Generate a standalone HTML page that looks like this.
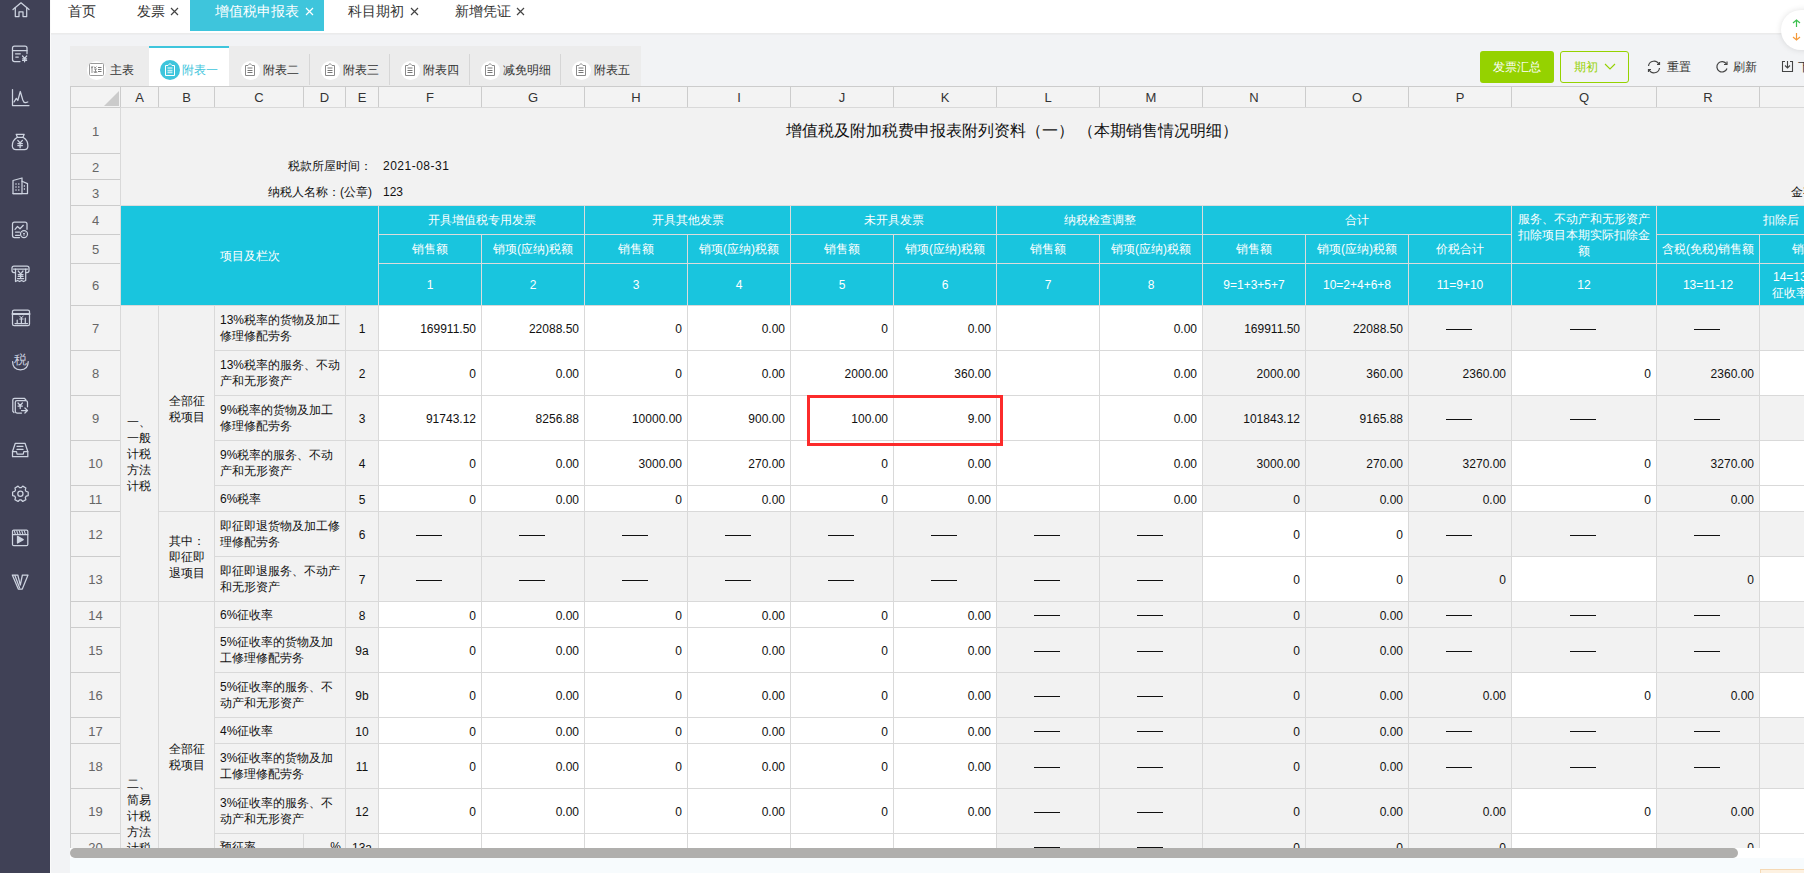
<!DOCTYPE html>
<html><head><meta charset="utf-8"><style>
*{box-sizing:border-box}
html,body{margin:0;padding:0}
body{width:1804px;height:873px;overflow:hidden;position:relative;background:#f2f3f5;font-family:"Liberation Sans",sans-serif;font-size:12px;color:#333}
.abs{position:absolute}
#grid{position:absolute;left:0;top:0;width:1804px;height:848px;overflow:hidden}
.c{position:absolute;border:1px solid;display:flex;align-items:center;white-space:nowrap;overflow:hidden;line-height:14px}
.t{position:absolute;white-space:nowrap;font-size:12px;line-height:14px;color:#111}
.tri{position:absolute;right:1px;bottom:1px;width:0;height:0;border-left:15px solid transparent;border-bottom:15px solid #cbcbcb}
.tb{top:3px;font-size:14px;line-height:16px}
.st{top:63px;font-size:12px;line-height:14px;color:#333}
.dash{display:inline-block;width:26px;height:1px;background:#111;margin-top:2px;margin-right:2px}
</style></head>
<body>
<div class="abs" style="left:0;top:0;width:50px;height:873px;background:#404156"></div><svg class="abs" style="left:8px;top:-4px" width="24" height="24" viewBox="0 0 24 24" fill="none" stroke="#cdd3e0" stroke-width="1.25" stroke-linejoin="round" stroke-linecap="round"><path d="M5 13.5 L13 6.8 L21 13.5"/><path d="M7.3 11.5 V20.5 H11 V15.8 H15 V20.5 H18.7 V11.5"/></svg><svg class="abs" style="left:8px;top:40px" width="24" height="24" viewBox="0 0 24 24" fill="none" stroke="#cdd3e0" stroke-width="1.25" stroke-linejoin="round" stroke-linecap="round"><path d="M12 21.5 H6.5 Q4.5 21.5 4.5 19.5 V8 Q4.5 6 6.5 6 H17 Q19 6 19 8 V13.5"/><path d="M4.5 10.5 H19"/><path d="M7.5 13.8 H12.3 M7.8 17 H10.3"/><path d="M14.5 16 L16.6 18.3 L18.7 16 M16.6 18.3 V21.8 M14.6 18.8 H18.6 M14.6 20.4 H18.6"/></svg><svg class="abs" style="left:8px;top:84px" width="24" height="24" viewBox="0 0 24 24" fill="none" stroke="#cdd3e0" stroke-width="1.25" stroke-linejoin="round" stroke-linecap="round"><path d="M4.5 5.5 V21.5 H21"/><path d="M6 18 L8.3 14.3 L9.8 16.5 L12.3 7.5 L14.8 16 Q15.8 19 17.8 18.6 L19.8 18"/></svg><svg class="abs" style="left:8px;top:128px" width="24" height="24" viewBox="0 0 24 24" fill="none" stroke="#cdd3e0" stroke-width="1.25" stroke-linejoin="round" stroke-linecap="round"><path d="M8.2 6.3 H16.2 L15 9.3 H9.4 Z"/><path d="M9.4 9.3 Q4 12.5 4.3 18 Q4.6 21.6 8 21.6 H16.5 Q19.8 21.6 19.9 18 Q20.2 12.5 15 9.3"/><path d="M9.8 12.3 L12.1 15 L14.4 12.3 M12.1 15 V19.8 M9.8 15.6 H14.4 M9.8 17.6 H14.4"/></svg><svg class="abs" style="left:8px;top:172px" width="24" height="24" viewBox="0 0 24 24" fill="none" stroke="#cdd3e0" stroke-width="1.25" stroke-linejoin="round" stroke-linecap="round"><path d="M5 21.5 V8.5 L14 6 V21.5 Z"/><path d="M14 9.2 L19.5 11.6 V21.5 H5"/><path d="M7.4 12 H8.6 M10.2 12 H11.4 M7.4 15 H8.6 M10.2 15 H11.4 M7.4 18 H8.6 M10.2 18 H11.4 M15.8 14 H17 M15.8 17 H17" stroke-width="1.6" stroke-linecap="butt"/></svg><svg class="abs" style="left:8px;top:216px" width="24" height="24" viewBox="0 0 24 24" fill="none" stroke="#cdd3e0" stroke-width="1.25" stroke-linejoin="round" stroke-linecap="round"><path d="M11.5 21.5 H6.5 Q4.5 21.5 4.5 19.5 V8 Q4.5 6 6.5 6 H17 Q19 6 19 8 V13.3"/><path d="M7 13.3 L9.5 10.5 L12 12.8 L15.3 9.3"/><path d="M7.5 16 H11.5 M7.5 19.3 H11.5"/><circle cx="16" cy="18.1" r="3.5"/><path d="M15 17 L16 18 L17 17 M16 18 V19.5" stroke-width="0.9"/></svg><svg class="abs" style="left:8px;top:260px" width="24" height="24" viewBox="0 0 24 24" fill="none" stroke="#cdd3e0" stroke-width="1.25" stroke-linejoin="round" stroke-linecap="round"><path d="M7.2 12.5 H6 Q4 12.5 4 10.5 V8 Q4 6 6 6 H19 Q21 6 21 8 V10.5 Q21 12.5 19 12.5 H17.8"/><path d="M5.5 9 H19.5"/><path d="M7.5 9 V21.5 L9.6 20.5 L11.6 21.5 L13.6 20.5 L15.6 21.5 L17.7 20.5 V9"/><path d="M10.2 11 L12.6 13.8 L15 11 M12.6 13.8 V18.3 M10.2 14.5 H15 M10.2 16.4 H15 M9.6 18.5 H15.6"/></svg><svg class="abs" style="left:8px;top:304px" width="24" height="24" viewBox="0 0 24 24" fill="none" stroke="#cdd3e0" stroke-width="1.25" stroke-linejoin="round" stroke-linecap="round"><rect x="4.5" y="6" width="17" height="15.6" rx="1.6"/><path d="M4.5 10 H21.5" stroke-width="2"/><path d="M7 19.5 H19.5"/><path d="M9.2 16 V19.5 M13.4 13.5 V19.5 M17.3 14.2 V19.5"/><path d="M11.6 12 L13.4 14 L15.2 12 M11.6 15 H15.2" stroke-width="1"/></svg><svg class="abs" style="left:8px;top:348px" width="24" height="24" viewBox="0 0 24 24" fill="none" stroke="#cdd3e0" stroke-width="1.25" stroke-linejoin="round" stroke-linecap="round"><path d="M4.6 13.5 Q4.6 21.8 12.4 21.8 Q20.2 21.8 20.2 13.5"/><text x="12.4" y="16.3" font-size="12.5" text-anchor="middle" fill="#cdd3e0" stroke="none" font-family="Liberation Sans">税</text></svg><svg class="abs" style="left:8px;top:392px" width="24" height="24" viewBox="0 0 24 24" fill="none" stroke="#cdd3e0" stroke-width="1.25" stroke-linejoin="round" stroke-linecap="round"><path d="M6 20.5 L4.8 19.3 V8 Q4.8 6.3 6.5 6.3 H16.3 L17.8 7.8"/><path d="M13.5 21 H9 Q7.3 21 7.3 19.3 V10.3 Q7.3 8.6 9 8.6 H17.5 Q19.5 8.6 19.5 10.5 V14.8"/><path d="M10 11 L12.2 13.5 L14.4 11 M12.2 13.5 V16.5 M10 14 H14.4"/><path d="M13.5 18.5 H19.5 M16.9 16 L19.5 18.5 L16.9 21"/></svg><svg class="abs" style="left:8px;top:436px" width="24" height="24" viewBox="0 0 24 24" fill="none" stroke="#cdd3e0" stroke-width="1.25" stroke-linejoin="round" stroke-linecap="round"><path d="M4.5 15.5 L7.3 7.3 H17 L19.8 15.5 V20.7 H4.5 Z"/><path d="M4.5 15.5 H8.5 L9 18 H15.3 L15.8 15.5 H19.8"/><path d="M9 10.3 H15 M9 13.4 H15"/></svg><svg class="abs" style="left:8px;top:480px" width="24" height="24" viewBox="0 0 24 24" fill="none" stroke="#cdd3e0" stroke-width="1.25" stroke-linejoin="round" stroke-linecap="round"><path d="M20.19 12.00 L20.19 15.60 L18.15 16.12 L17.29 17.62 L17.86 19.65 L14.74 21.45 L13.26 19.94 L11.54 19.94 L10.06 21.45 L6.94 19.65 L7.51 17.62 L6.65 16.12 L4.61 15.60 L4.61 12.00 L6.65 11.48 L7.51 9.98 L6.94 7.95 L10.06 6.15 L11.54 7.66 L13.26 7.66 L14.74 6.15 L17.86 7.95 L17.29 9.98 L18.15 11.48 Z"/><circle cx="12.4" cy="13.8" r="2.6"/></svg><svg class="abs" style="left:8px;top:524px" width="24" height="24" viewBox="0 0 24 24" fill="none" stroke="#cdd3e0" stroke-width="1.25" stroke-linejoin="round" stroke-linecap="round"><rect x="4.5" y="6" width="15.3" height="15.6" rx="1.2"/><path d="M4.5 10.5 H19.8"/><path d="M6.3 6.8 L7.3 10 M8.8 6.8 L9.8 10 M11.3 6.8 L12.3 10 M13.8 6.8 L14.8 10 M16.3 6.8 L17.3 10" stroke-width="1.1"/><path d="M9.5 12.3 V19 L15.2 15.6 Z" fill="#cdd3e0"/></svg><svg class="abs" style="left:8px;top:568px" width="24" height="24" viewBox="0 0 24 24" fill="none" stroke="#cdd3e0" stroke-width="1.25" stroke-linejoin="round" stroke-linecap="round"><path d="M4.3 7 H9.8 L12.3 17 L14.4 7 H20 L14.3 21 H10.3 Z"/><path d="M6.9 7.5 L11.5 19.8"/></svg>
<div class="abs" style="left:50px;top:0;width:1754px;height:34px;background:#fff;border-bottom:1px solid #ebebeb;box-shadow:0 1px 1px rgba(0,0,0,0.02)"></div><div class="abs" style="left:190px;top:0;width:134px;height:31px;background:#3ec5dc"></div><div class="t tb" style="left:68px;color:#333">首页</div><div class="t tb" style="left:137px;color:#333">发票</div><svg class="abs" style="left:170px;top:7px" width="9" height="9" viewBox="0 0 9 9" stroke="#444" stroke-width="1.2"><path d="M1 1 L8 8 M8 1 L1 8"/></svg><div class="t tb" style="left:215px;color:#fff">增值税申报表</div><svg class="abs" style="left:305px;top:7px" width="9" height="9" viewBox="0 0 9 9" stroke="#fff" stroke-width="1.2"><path d="M1 1 L8 8 M8 1 L1 8"/></svg><div class="t tb" style="left:348px;color:#333">科目期初</div><svg class="abs" style="left:410px;top:7px" width="9" height="9" viewBox="0 0 9 9" stroke="#444" stroke-width="1.2"><path d="M1 1 L8 8 M8 1 L1 8"/></svg><div class="t tb" style="left:455px;color:#333">新增凭证</div><svg class="abs" style="left:516px;top:7px" width="9" height="9" viewBox="0 0 9 9" stroke="#444" stroke-width="1.2"><path d="M1 1 L8 8 M8 1 L1 8"/></svg>
<div class="abs" style="left:70px;top:46px;width:571px;height:40px;background:#ececec"></div><div class="abs" style="left:149px;top:46px;width:80px;height:40px;background:#fff;border-top:2px solid #3ec5dc"></div><div class="abs" style="left:309px;top:54px;width:1px;height:31px;background:#d6d6d6"></div><div class="abs" style="left:389px;top:54px;width:1px;height:31px;background:#d6d6d6"></div><div class="abs" style="left:469px;top:54px;width:1px;height:31px;background:#d6d6d6"></div><div class="abs" style="left:560px;top:54px;width:1px;height:31px;background:#d6d6d6"></div><div class="abs" style="left:87px;top:60.5px;width:19px;height:19px;border-radius:50%;background:#fff"></div><svg class="abs" style="left:89px;top:63px" width="15" height="13" viewBox="0 0 15 13" fill="none" stroke="#999" stroke-width="1"><rect x="0.5" y="0.5" width="14" height="12" rx="1"/><path d="M9 4.5 H12.5 M9 6.5 H12.5 M9 8.5 H12.5" stroke="#777"/><path d="M3 3 V10 M2 5 L4 4 M5 3.5 L6 5 L7.5 3.5 M5 6 H8 M6.5 6 V10 M5.5 10 L5 8 M7 8 L8 10" stroke="#777" stroke-width="0.8"/></svg><div class="abs" style="left:160px;top:60px;width:20px;height:20px;border-radius:50%;background:#3ec5dc"></div><svg class="abs" style="left:164px;top:62px" width="12" height="15" viewBox="0 0 12 15" fill="none" stroke="#fff" stroke-width="1"><path d="M1.5 3.5 V13.5 H10.5 V3.5 H8 L6 1.5 L4 3.5 Z"/><path d="M3.5 6 H8.5 M3.5 8.5 H8.5 M3.5 10.5 H8.5" stroke="#bfeef6" stroke-width="1.3"/></svg><div class="abs" style="left:240.5px;top:60.5px;width:19px;height:19px;border-radius:50%;background:#fff"></div><svg class="abs" style="left:244px;top:62px" width="12" height="15" viewBox="0 0 12 15" fill="none" stroke="#8a8a8a" stroke-width="1"><path d="M1.5 3.5 V13.5 H10.5 V3.5 H8 L6 1.5 L4 3.5 Z"/><path d="M3.5 6 H8.5 M3.5 8.5 H8.5 M3.5 10.5 H8.5" stroke="#777"/></svg><div class="abs" style="left:320.5px;top:60.5px;width:19px;height:19px;border-radius:50%;background:#fff"></div><svg class="abs" style="left:324px;top:62px" width="12" height="15" viewBox="0 0 12 15" fill="none" stroke="#8a8a8a" stroke-width="1"><path d="M1.5 3.5 V13.5 H10.5 V3.5 H8 L6 1.5 L4 3.5 Z"/><path d="M3.5 6 H8.5 M3.5 8.5 H8.5 M3.5 10.5 H8.5" stroke="#777"/></svg><div class="abs" style="left:400.5px;top:60.5px;width:19px;height:19px;border-radius:50%;background:#fff"></div><svg class="abs" style="left:404px;top:62px" width="12" height="15" viewBox="0 0 12 15" fill="none" stroke="#8a8a8a" stroke-width="1"><path d="M1.5 3.5 V13.5 H10.5 V3.5 H8 L6 1.5 L4 3.5 Z"/><path d="M3.5 6 H8.5 M3.5 8.5 H8.5 M3.5 10.5 H8.5" stroke="#777"/></svg><div class="abs" style="left:480.5px;top:60.5px;width:19px;height:19px;border-radius:50%;background:#fff"></div><svg class="abs" style="left:484px;top:62px" width="12" height="15" viewBox="0 0 12 15" fill="none" stroke="#8a8a8a" stroke-width="1"><path d="M1.5 3.5 V13.5 H10.5 V3.5 H8 L6 1.5 L4 3.5 Z"/><path d="M3.5 6 H8.5 M3.5 8.5 H8.5 M3.5 10.5 H8.5" stroke="#777"/></svg><div class="abs" style="left:571.5px;top:60.5px;width:19px;height:19px;border-radius:50%;background:#fff"></div><svg class="abs" style="left:575px;top:62px" width="12" height="15" viewBox="0 0 12 15" fill="none" stroke="#8a8a8a" stroke-width="1"><path d="M1.5 3.5 V13.5 H10.5 V3.5 H8 L6 1.5 L4 3.5 Z"/><path d="M3.5 6 H8.5 M3.5 8.5 H8.5 M3.5 10.5 H8.5" stroke="#777"/></svg><div class="t st" style="left:110px">主表</div><div class="t st" style="left:182px;color:#3ec5dc">附表一</div><div class="t st" style="left:263px">附表二</div><div class="t st" style="left:343px">附表三</div><div class="t st" style="left:423px">附表四</div><div class="t st" style="left:503px">减免明细</div><div class="t st" style="left:594px">附表五</div>
<div class="abs" style="left:1480px;top:51px;width:74px;height:32px;background:#95d200;border-radius:3px"></div><div class="t st" style="top:60px;left:1493px;color:#fff">发票汇总</div><div class="abs" style="left:1560px;top:51px;width:69px;height:32px;border:1px solid #95d200;border-radius:3px"></div><div class="t st" style="top:60px;left:1574px;color:#95d200">期初</div><svg class="abs" style="left:1604px;top:63px" width="12" height="8" viewBox="0 0 12 8" fill="none" stroke="#95d200" stroke-width="1.1"><path d="M1 1 L6 6 L11 1"/></svg><svg class="abs" style="left:1646px;top:60px" width="16" height="14" viewBox="0 0 16 14" fill="none" stroke="#444" stroke-width="1.2"><path d="M2.5 6 A5.5 5.5 0 0 1 13 4.5"/><path d="M13.5 8 A5.5 5.5 0 0 1 3 9.5"/><path d="M11 4.5 H13.5 V2" /><path d="M5 9.5 H2.5 V12"/></svg><div class="t st" style="top:60px;left:1667px">重置</div><svg class="abs" style="left:1715px;top:60px" width="14" height="14" viewBox="0 0 14 14" fill="none" stroke="#444" stroke-width="1.2"><path d="M11.5 4 A5.2 5.2 0 1 0 12 8.5"/><path d="M12 1.5 V4.5 H9"/></svg><div class="t st" style="top:60px;left:1733px">刷新</div><svg class="abs" style="left:1781px;top:60px" width="13" height="13" viewBox="0 0 13 13" fill="none" stroke="#444" stroke-width="1.1"><path d="M4 1.5 H1.5 V11.5 H11.5 V1.5 H9"/><path d="M6.5 1 V8 M4 5.5 L6.5 8 L9 5.5"/></svg><div class="t st" style="top:60px;left:1798px">下载</div><div class="abs" style="left:1781px;top:10px;width:60px;height:40px;border-radius:20px;background:#fff;box-shadow:0 0 6px rgba(0,0,0,0.12)"></div><svg class="abs" style="left:1792px;top:19px" width="9" height="8" viewBox="0 0 9 8" fill="none" stroke="#3bbf4e" stroke-width="1.2"><path d="M1 4 L4.5 1 L8 4 M4.5 1 V8"/></svg><svg class="abs" style="left:1792px;top:33px" width="9" height="8" viewBox="0 0 9 8" fill="none" stroke="#f59a3a" stroke-width="1.2"><path d="M1 4 L4.5 7 L8 4 M4.5 0 V7"/></svg>
<div id="grid">
<div class="c" style="left:70px;top:86px;width:51px;height:22px;background:#f3f3f3;border-color:#cccccc;justify-content:center;text-align:center;color:#111111;font-size:12px;padding:0 4px;"><i class="tri"></i></div>
<div class="c" style="left:120px;top:86px;width:39px;height:22px;background:#f3f3f3;border-color:#cccccc;justify-content:center;text-align:center;color:#333;font-size:13px;padding:0 4px;padding-top:2px;">A</div>
<div class="c" style="left:158px;top:86px;width:57px;height:22px;background:#f3f3f3;border-color:#cccccc;justify-content:center;text-align:center;color:#333;font-size:13px;padding:0 4px;padding-top:2px;">B</div>
<div class="c" style="left:214px;top:86px;width:90px;height:22px;background:#f3f3f3;border-color:#cccccc;justify-content:center;text-align:center;color:#333;font-size:13px;padding:0 4px;padding-top:2px;">C</div>
<div class="c" style="left:303px;top:86px;width:43px;height:22px;background:#f3f3f3;border-color:#cccccc;justify-content:center;text-align:center;color:#333;font-size:13px;padding:0 4px;padding-top:2px;">D</div>
<div class="c" style="left:345px;top:86px;width:34px;height:22px;background:#f3f3f3;border-color:#cccccc;justify-content:center;text-align:center;color:#333;font-size:13px;padding:0 4px;padding-top:2px;">E</div>
<div class="c" style="left:378px;top:86px;width:104px;height:22px;background:#f3f3f3;border-color:#cccccc;justify-content:center;text-align:center;color:#333;font-size:13px;padding:0 4px;padding-top:2px;">F</div>
<div class="c" style="left:481px;top:86px;width:104px;height:22px;background:#f3f3f3;border-color:#cccccc;justify-content:center;text-align:center;color:#333;font-size:13px;padding:0 4px;padding-top:2px;">G</div>
<div class="c" style="left:584px;top:86px;width:104px;height:22px;background:#f3f3f3;border-color:#cccccc;justify-content:center;text-align:center;color:#333;font-size:13px;padding:0 4px;padding-top:2px;">H</div>
<div class="c" style="left:687px;top:86px;width:104px;height:22px;background:#f3f3f3;border-color:#cccccc;justify-content:center;text-align:center;color:#333;font-size:13px;padding:0 4px;padding-top:2px;">I</div>
<div class="c" style="left:790px;top:86px;width:104px;height:22px;background:#f3f3f3;border-color:#cccccc;justify-content:center;text-align:center;color:#333;font-size:13px;padding:0 4px;padding-top:2px;">J</div>
<div class="c" style="left:893px;top:86px;width:104px;height:22px;background:#f3f3f3;border-color:#cccccc;justify-content:center;text-align:center;color:#333;font-size:13px;padding:0 4px;padding-top:2px;">K</div>
<div class="c" style="left:996px;top:86px;width:104px;height:22px;background:#f3f3f3;border-color:#cccccc;justify-content:center;text-align:center;color:#333;font-size:13px;padding:0 4px;padding-top:2px;">L</div>
<div class="c" style="left:1099px;top:86px;width:104px;height:22px;background:#f3f3f3;border-color:#cccccc;justify-content:center;text-align:center;color:#333;font-size:13px;padding:0 4px;padding-top:2px;">M</div>
<div class="c" style="left:1202px;top:86px;width:104px;height:22px;background:#f3f3f3;border-color:#cccccc;justify-content:center;text-align:center;color:#333;font-size:13px;padding:0 4px;padding-top:2px;">N</div>
<div class="c" style="left:1305px;top:86px;width:104px;height:22px;background:#f3f3f3;border-color:#cccccc;justify-content:center;text-align:center;color:#333;font-size:13px;padding:0 4px;padding-top:2px;">O</div>
<div class="c" style="left:1408px;top:86px;width:104px;height:22px;background:#f3f3f3;border-color:#cccccc;justify-content:center;text-align:center;color:#333;font-size:13px;padding:0 4px;padding-top:2px;">P</div>
<div class="c" style="left:1511px;top:86px;width:146px;height:22px;background:#f3f3f3;border-color:#cccccc;justify-content:center;text-align:center;color:#333;font-size:13px;padding:0 4px;padding-top:2px;">Q</div>
<div class="c" style="left:1656px;top:86px;width:104px;height:22px;background:#f3f3f3;border-color:#cccccc;justify-content:center;text-align:center;color:#333;font-size:13px;padding:0 4px;padding-top:2px;">R</div>
<div class="c" style="left:1759px;top:86px;width:146px;height:22px;background:#f3f3f3;border-color:#cccccc;justify-content:center;text-align:center;color:#333;font-size:13px;padding:0 4px;padding-top:2px;">S</div>
<div class="c" style="left:70px;top:107px;width:51px;height:47px;background:#f3f3f3;border-color:#cccccc;justify-content:center;text-align:center;color:#666;font-size:13px;padding:0 4px;padding-top:2px;">1</div>
<div class="c" style="left:70px;top:153px;width:51px;height:27px;background:#f3f3f3;border-color:#cccccc;justify-content:center;text-align:center;color:#666;font-size:13px;padding:0 4px;padding-top:2px;">2</div>
<div class="c" style="left:70px;top:179px;width:51px;height:27px;background:#f3f3f3;border-color:#cccccc;justify-content:center;text-align:center;color:#666;font-size:13px;padding:0 4px;padding-top:2px;">3</div>
<div class="c" style="left:70px;top:205px;width:51px;height:30px;background:#f3f3f3;border-color:#cccccc;justify-content:center;text-align:center;color:#666;font-size:13px;padding:0 4px;padding-top:2px;">4</div>
<div class="c" style="left:70px;top:234px;width:51px;height:30px;background:#f3f3f3;border-color:#cccccc;justify-content:center;text-align:center;color:#666;font-size:13px;padding:0 4px;padding-top:2px;">5</div>
<div class="c" style="left:70px;top:263px;width:51px;height:43px;background:#f3f3f3;border-color:#cccccc;justify-content:center;text-align:center;color:#666;font-size:13px;padding:0 4px;padding-top:2px;">6</div>
<div class="c" style="left:70px;top:305px;width:51px;height:46px;background:#f3f3f3;border-color:#cccccc;justify-content:center;text-align:center;color:#666;font-size:13px;padding:0 4px;padding-top:2px;">7</div>
<div class="c" style="left:70px;top:350px;width:51px;height:46px;background:#f3f3f3;border-color:#cccccc;justify-content:center;text-align:center;color:#666;font-size:13px;padding:0 4px;padding-top:2px;">8</div>
<div class="c" style="left:70px;top:395px;width:51px;height:46px;background:#f3f3f3;border-color:#cccccc;justify-content:center;text-align:center;color:#666;font-size:13px;padding:0 4px;padding-top:2px;">9</div>
<div class="c" style="left:70px;top:440px;width:51px;height:46px;background:#f3f3f3;border-color:#cccccc;justify-content:center;text-align:center;color:#666;font-size:13px;padding:0 4px;padding-top:2px;">10</div>
<div class="c" style="left:70px;top:485px;width:51px;height:27px;background:#f3f3f3;border-color:#cccccc;justify-content:center;text-align:center;color:#666;font-size:13px;padding:0 4px;padding-top:2px;">11</div>
<div class="c" style="left:70px;top:511px;width:51px;height:46px;background:#f3f3f3;border-color:#cccccc;justify-content:center;text-align:center;color:#666;font-size:13px;padding:0 4px;padding-top:2px;">12</div>
<div class="c" style="left:70px;top:556px;width:51px;height:46px;background:#f3f3f3;border-color:#cccccc;justify-content:center;text-align:center;color:#666;font-size:13px;padding:0 4px;padding-top:2px;">13</div>
<div class="c" style="left:70px;top:601px;width:51px;height:27px;background:#f3f3f3;border-color:#cccccc;justify-content:center;text-align:center;color:#666;font-size:13px;padding:0 4px;padding-top:2px;">14</div>
<div class="c" style="left:70px;top:627px;width:51px;height:46px;background:#f3f3f3;border-color:#cccccc;justify-content:center;text-align:center;color:#666;font-size:13px;padding:0 4px;padding-top:2px;">15</div>
<div class="c" style="left:70px;top:672px;width:51px;height:46px;background:#f3f3f3;border-color:#cccccc;justify-content:center;text-align:center;color:#666;font-size:13px;padding:0 4px;padding-top:2px;">16</div>
<div class="c" style="left:70px;top:717px;width:51px;height:27px;background:#f3f3f3;border-color:#cccccc;justify-content:center;text-align:center;color:#666;font-size:13px;padding:0 4px;padding-top:2px;">17</div>
<div class="c" style="left:70px;top:743px;width:51px;height:46px;background:#f3f3f3;border-color:#cccccc;justify-content:center;text-align:center;color:#666;font-size:13px;padding:0 4px;padding-top:2px;">18</div>
<div class="c" style="left:70px;top:788px;width:51px;height:46px;background:#f3f3f3;border-color:#cccccc;justify-content:center;text-align:center;color:#666;font-size:13px;padding:0 4px;padding-top:2px;">19</div>
<div class="c" style="left:70px;top:833px;width:51px;height:27px;background:#f3f3f3;border-color:#cccccc;justify-content:center;text-align:center;color:#666;font-size:13px;padding:0 4px;padding-top:2px;">20</div>
<div class="c" style="left:120px;top:107px;width:1781px;height:99px;background:#f2f2f2;border-color:#d9d9d9;justify-content:center;text-align:center;color:#111111;font-size:12px;padding:0 4px;"></div>
<div class="c" style="left:120px;top:205px;width:259px;height:101px;background:#19c5de;border-color:#dcdcdc;justify-content:center;text-align:center;color:#fff;font-size:12px;padding:0 2px;line-height:16px;">项目及栏次</div>
<div class="c" style="left:378px;top:205px;width:207px;height:30px;background:#19c5de;border-color:#dcdcdc;justify-content:center;text-align:center;color:#fff;font-size:12px;padding:0 2px;line-height:16px;">开具增值税专用发票</div>
<div class="c" style="left:584px;top:205px;width:207px;height:30px;background:#19c5de;border-color:#dcdcdc;justify-content:center;text-align:center;color:#fff;font-size:12px;padding:0 2px;line-height:16px;">开具其他发票</div>
<div class="c" style="left:790px;top:205px;width:207px;height:30px;background:#19c5de;border-color:#dcdcdc;justify-content:center;text-align:center;color:#fff;font-size:12px;padding:0 2px;line-height:16px;">未开具发票</div>
<div class="c" style="left:996px;top:205px;width:207px;height:30px;background:#19c5de;border-color:#dcdcdc;justify-content:center;text-align:center;color:#fff;font-size:12px;padding:0 2px;line-height:16px;">纳税检查调整</div>
<div class="c" style="left:1202px;top:205px;width:310px;height:30px;background:#19c5de;border-color:#dcdcdc;justify-content:center;text-align:center;color:#fff;font-size:12px;padding:0 2px;line-height:16px;">合计</div>
<div class="c" style="left:1511px;top:205px;width:146px;height:59px;background:#19c5de;border-color:#dcdcdc;justify-content:center;text-align:center;color:#fff;font-size:12px;padding:0 2px;line-height:16px;">服务、不动产和无形资产<br>扣除项目本期实际扣除金<br>额</div>
<div class="c" style="left:1656px;top:205px;width:249px;height:30px;background:#19c5de;border-color:#dcdcdc;justify-content:center;text-align:center;color:#fff;font-size:12px;padding:0 2px;line-height:16px;">扣除后</div>
<div class="c" style="left:378px;top:234px;width:104px;height:30px;background:#19c5de;border-color:#dcdcdc;justify-content:center;text-align:center;color:#fff;font-size:12px;padding:0 2px;line-height:16px;">销售额</div>
<div class="c" style="left:481px;top:234px;width:104px;height:30px;background:#19c5de;border-color:#dcdcdc;justify-content:center;text-align:center;color:#fff;font-size:12px;padding:0 2px;line-height:16px;">销项(应纳)税额</div>
<div class="c" style="left:584px;top:234px;width:104px;height:30px;background:#19c5de;border-color:#dcdcdc;justify-content:center;text-align:center;color:#fff;font-size:12px;padding:0 2px;line-height:16px;">销售额</div>
<div class="c" style="left:687px;top:234px;width:104px;height:30px;background:#19c5de;border-color:#dcdcdc;justify-content:center;text-align:center;color:#fff;font-size:12px;padding:0 2px;line-height:16px;">销项(应纳)税额</div>
<div class="c" style="left:790px;top:234px;width:104px;height:30px;background:#19c5de;border-color:#dcdcdc;justify-content:center;text-align:center;color:#fff;font-size:12px;padding:0 2px;line-height:16px;">销售额</div>
<div class="c" style="left:893px;top:234px;width:104px;height:30px;background:#19c5de;border-color:#dcdcdc;justify-content:center;text-align:center;color:#fff;font-size:12px;padding:0 2px;line-height:16px;">销项(应纳)税额</div>
<div class="c" style="left:996px;top:234px;width:104px;height:30px;background:#19c5de;border-color:#dcdcdc;justify-content:center;text-align:center;color:#fff;font-size:12px;padding:0 2px;line-height:16px;">销售额</div>
<div class="c" style="left:1099px;top:234px;width:104px;height:30px;background:#19c5de;border-color:#dcdcdc;justify-content:center;text-align:center;color:#fff;font-size:12px;padding:0 2px;line-height:16px;">销项(应纳)税额</div>
<div class="c" style="left:1202px;top:234px;width:104px;height:30px;background:#19c5de;border-color:#dcdcdc;justify-content:center;text-align:center;color:#fff;font-size:12px;padding:0 2px;line-height:16px;">销售额</div>
<div class="c" style="left:1305px;top:234px;width:104px;height:30px;background:#19c5de;border-color:#dcdcdc;justify-content:center;text-align:center;color:#fff;font-size:12px;padding:0 2px;line-height:16px;">销项(应纳)税额</div>
<div class="c" style="left:1408px;top:234px;width:104px;height:30px;background:#19c5de;border-color:#dcdcdc;justify-content:center;text-align:center;color:#fff;font-size:12px;padding:0 2px;line-height:16px;">价税合计</div>
<div class="c" style="left:1656px;top:234px;width:104px;height:30px;background:#19c5de;border-color:#dcdcdc;justify-content:center;text-align:center;color:#fff;font-size:12px;padding:0 2px;line-height:16px;">含税(免税)销售额</div>
<div class="c" style="left:1759px;top:234px;width:146px;height:30px;background:#19c5de;border-color:#dcdcdc;justify-content:center;text-align:center;color:#fff;font-size:12px;padding:0 2px;line-height:16px;">销项(应纳)税额</div>
<div class="c" style="left:378px;top:263px;width:104px;height:43px;background:#19c5de;border-color:#dcdcdc;justify-content:center;text-align:center;color:#fff;font-size:12px;padding:0 2px;line-height:16px;">1</div>
<div class="c" style="left:481px;top:263px;width:104px;height:43px;background:#19c5de;border-color:#dcdcdc;justify-content:center;text-align:center;color:#fff;font-size:12px;padding:0 2px;line-height:16px;">2</div>
<div class="c" style="left:584px;top:263px;width:104px;height:43px;background:#19c5de;border-color:#dcdcdc;justify-content:center;text-align:center;color:#fff;font-size:12px;padding:0 2px;line-height:16px;">3</div>
<div class="c" style="left:687px;top:263px;width:104px;height:43px;background:#19c5de;border-color:#dcdcdc;justify-content:center;text-align:center;color:#fff;font-size:12px;padding:0 2px;line-height:16px;">4</div>
<div class="c" style="left:790px;top:263px;width:104px;height:43px;background:#19c5de;border-color:#dcdcdc;justify-content:center;text-align:center;color:#fff;font-size:12px;padding:0 2px;line-height:16px;">5</div>
<div class="c" style="left:893px;top:263px;width:104px;height:43px;background:#19c5de;border-color:#dcdcdc;justify-content:center;text-align:center;color:#fff;font-size:12px;padding:0 2px;line-height:16px;">6</div>
<div class="c" style="left:996px;top:263px;width:104px;height:43px;background:#19c5de;border-color:#dcdcdc;justify-content:center;text-align:center;color:#fff;font-size:12px;padding:0 2px;line-height:16px;">7</div>
<div class="c" style="left:1099px;top:263px;width:104px;height:43px;background:#19c5de;border-color:#dcdcdc;justify-content:center;text-align:center;color:#fff;font-size:12px;padding:0 2px;line-height:16px;">8</div>
<div class="c" style="left:1202px;top:263px;width:104px;height:43px;background:#19c5de;border-color:#dcdcdc;justify-content:center;text-align:center;color:#fff;font-size:12px;padding:0 2px;line-height:16px;">9=1+3+5+7</div>
<div class="c" style="left:1305px;top:263px;width:104px;height:43px;background:#19c5de;border-color:#dcdcdc;justify-content:center;text-align:center;color:#fff;font-size:12px;padding:0 2px;line-height:16px;">10=2+4+6+8</div>
<div class="c" style="left:1408px;top:263px;width:104px;height:43px;background:#19c5de;border-color:#dcdcdc;justify-content:center;text-align:center;color:#fff;font-size:12px;padding:0 2px;line-height:16px;">11=9+10</div>
<div class="c" style="left:1511px;top:263px;width:146px;height:43px;background:#19c5de;border-color:#dcdcdc;justify-content:center;text-align:center;color:#fff;font-size:12px;padding:0 2px;line-height:16px;">12</div>
<div class="c" style="left:1656px;top:263px;width:104px;height:43px;background:#19c5de;border-color:#dcdcdc;justify-content:center;text-align:center;color:#fff;font-size:12px;padding:0 2px;line-height:16px;">13=11-12</div>
<div class="c" style="left:1759px;top:263px;width:146px;height:43px;background:#19c5de;border-color:#dcdcdc;justify-content:center;text-align:center;color:#fff;font-size:12px;padding:0 2px;line-height:16px;">14=13÷(100%+税率或<br>征收率)×税率或征收率</div>
<div class="c" style="left:120px;top:305px;width:39px;height:297px;background:#f2f2f2;border-color:#d9d9d9;justify-content:flex-start;text-align:left;color:#111111;font-size:12px;padding:0 6px;line-height:16px;">一、<br>一般<br>计税<br>方法<br>计税</div>
<div class="c" style="left:158px;top:305px;width:57px;height:207px;background:#f2f2f2;border-color:#d9d9d9;justify-content:center;text-align:center;color:#111111;font-size:12px;padding:0 5px;line-height:16px;">全部征<br>税项目</div>
<div class="c" style="left:158px;top:511px;width:57px;height:91px;background:#f2f2f2;border-color:#d9d9d9;justify-content:center;text-align:center;color:#111111;font-size:12px;padding:0 5px;line-height:16px;">其中：<br>即征即<br>退项目</div>
<div class="c" style="left:120px;top:601px;width:39px;height:430px;background:#f2f2f2;border-color:#d9d9d9;justify-content:flex-start;text-align:left;color:#111111;font-size:12px;padding:0 6px;line-height:16px;">二、<br>简易<br>计税<br>方法<br>计税</div>
<div class="c" style="left:158px;top:601px;width:57px;height:312px;background:#f2f2f2;border-color:#d9d9d9;justify-content:center;text-align:center;color:#111111;font-size:12px;padding:0 4px;line-height:16px;">全部征<br>税项目</div>
<div class="c" style="left:214px;top:305px;width:132px;height:46px;background:#f2f2f2;border-color:#d9d9d9;justify-content:flex-start;text-align:left;color:#111111;font-size:12px;padding:0 5px;line-height:16px;">13%税率的货物及加工<br>修理修配劳务</div>
<div class="c" style="left:214px;top:350px;width:132px;height:46px;background:#f2f2f2;border-color:#d9d9d9;justify-content:flex-start;text-align:left;color:#111111;font-size:12px;padding:0 5px;line-height:16px;">13%税率的服务、不动<br>产和无形资产</div>
<div class="c" style="left:214px;top:395px;width:132px;height:46px;background:#f2f2f2;border-color:#d9d9d9;justify-content:flex-start;text-align:left;color:#111111;font-size:12px;padding:0 5px;line-height:16px;">9%税率的货物及加工<br>修理修配劳务</div>
<div class="c" style="left:214px;top:440px;width:132px;height:46px;background:#f2f2f2;border-color:#d9d9d9;justify-content:flex-start;text-align:left;color:#111111;font-size:12px;padding:0 5px;line-height:16px;">9%税率的服务、不动<br>产和无形资产</div>
<div class="c" style="left:214px;top:485px;width:132px;height:27px;background:#f2f2f2;border-color:#d9d9d9;justify-content:flex-start;text-align:left;color:#111111;font-size:12px;padding:0 5px;line-height:16px;">6%税率</div>
<div class="c" style="left:214px;top:511px;width:132px;height:46px;background:#f2f2f2;border-color:#d9d9d9;justify-content:flex-start;text-align:left;color:#111111;font-size:12px;padding:0 5px;line-height:16px;">即征即退货物及加工修<br>理修配劳务</div>
<div class="c" style="left:214px;top:556px;width:132px;height:46px;background:#f2f2f2;border-color:#d9d9d9;justify-content:flex-start;text-align:left;color:#111111;font-size:12px;padding:0 5px;line-height:16px;">即征即退服务、不动产<br>和无形资产</div>
<div class="c" style="left:214px;top:601px;width:132px;height:27px;background:#f2f2f2;border-color:#d9d9d9;justify-content:flex-start;text-align:left;color:#111111;font-size:12px;padding:0 5px;line-height:16px;">6%征收率</div>
<div class="c" style="left:214px;top:627px;width:132px;height:46px;background:#f2f2f2;border-color:#d9d9d9;justify-content:flex-start;text-align:left;color:#111111;font-size:12px;padding:0 5px;line-height:16px;">5%征收率的货物及加<br>工修理修配劳务</div>
<div class="c" style="left:214px;top:672px;width:132px;height:46px;background:#f2f2f2;border-color:#d9d9d9;justify-content:flex-start;text-align:left;color:#111111;font-size:12px;padding:0 5px;line-height:16px;">5%征收率的服务、不<br>动产和无形资产</div>
<div class="c" style="left:214px;top:717px;width:132px;height:27px;background:#f2f2f2;border-color:#d9d9d9;justify-content:flex-start;text-align:left;color:#111111;font-size:12px;padding:0 5px;line-height:16px;">4%征收率</div>
<div class="c" style="left:214px;top:743px;width:132px;height:46px;background:#f2f2f2;border-color:#d9d9d9;justify-content:flex-start;text-align:left;color:#111111;font-size:12px;padding:0 5px;line-height:16px;">3%征收率的货物及加<br>工修理修配劳务</div>
<div class="c" style="left:214px;top:788px;width:132px;height:46px;background:#f2f2f2;border-color:#d9d9d9;justify-content:flex-start;text-align:left;color:#111111;font-size:12px;padding:0 5px;line-height:16px;">3%征收率的服务、不<br>动产和无形资产</div>
<div class="c" style="left:214px;top:833px;width:90px;height:27px;background:#f2f2f2;border-color:#d9d9d9;justify-content:flex-start;text-align:left;color:#111111;font-size:12px;padding:0 5px;line-height:16px;">预征率</div>
<div class="c" style="left:303px;top:833px;width:43px;height:27px;background:#f2f2f2;border-color:#d9d9d9;justify-content:flex-end;text-align:right;color:#111111;font-size:12px;padding:0 4px;line-height:16px;">%</div>
<div class="c" style="left:345px;top:305px;width:34px;height:46px;background:#f2f2f2;border-color:#d9d9d9;justify-content:center;text-align:center;color:#111111;font-size:12px;padding:0 4px;padding-top:2px;">1</div>
<div class="c" style="left:345px;top:350px;width:34px;height:46px;background:#f2f2f2;border-color:#d9d9d9;justify-content:center;text-align:center;color:#111111;font-size:12px;padding:0 4px;padding-top:2px;">2</div>
<div class="c" style="left:345px;top:395px;width:34px;height:46px;background:#f2f2f2;border-color:#d9d9d9;justify-content:center;text-align:center;color:#111111;font-size:12px;padding:0 4px;padding-top:2px;">3</div>
<div class="c" style="left:345px;top:440px;width:34px;height:46px;background:#f2f2f2;border-color:#d9d9d9;justify-content:center;text-align:center;color:#111111;font-size:12px;padding:0 4px;padding-top:2px;">4</div>
<div class="c" style="left:345px;top:485px;width:34px;height:27px;background:#f2f2f2;border-color:#d9d9d9;justify-content:center;text-align:center;color:#111111;font-size:12px;padding:0 4px;padding-top:2px;">5</div>
<div class="c" style="left:345px;top:511px;width:34px;height:46px;background:#f2f2f2;border-color:#d9d9d9;justify-content:center;text-align:center;color:#111111;font-size:12px;padding:0 4px;padding-top:2px;">6</div>
<div class="c" style="left:345px;top:556px;width:34px;height:46px;background:#f2f2f2;border-color:#d9d9d9;justify-content:center;text-align:center;color:#111111;font-size:12px;padding:0 4px;padding-top:2px;">7</div>
<div class="c" style="left:345px;top:601px;width:34px;height:27px;background:#f2f2f2;border-color:#d9d9d9;justify-content:center;text-align:center;color:#111111;font-size:12px;padding:0 4px;padding-top:2px;">8</div>
<div class="c" style="left:345px;top:627px;width:34px;height:46px;background:#f2f2f2;border-color:#d9d9d9;justify-content:center;text-align:center;color:#111111;font-size:12px;padding:0 4px;padding-top:2px;">9a</div>
<div class="c" style="left:345px;top:672px;width:34px;height:46px;background:#f2f2f2;border-color:#d9d9d9;justify-content:center;text-align:center;color:#111111;font-size:12px;padding:0 4px;padding-top:2px;">9b</div>
<div class="c" style="left:345px;top:717px;width:34px;height:27px;background:#f2f2f2;border-color:#d9d9d9;justify-content:center;text-align:center;color:#111111;font-size:12px;padding:0 4px;padding-top:2px;">10</div>
<div class="c" style="left:345px;top:743px;width:34px;height:46px;background:#f2f2f2;border-color:#d9d9d9;justify-content:center;text-align:center;color:#111111;font-size:12px;padding:0 4px;padding-top:2px;">11</div>
<div class="c" style="left:345px;top:788px;width:34px;height:46px;background:#f2f2f2;border-color:#d9d9d9;justify-content:center;text-align:center;color:#111111;font-size:12px;padding:0 4px;padding-top:2px;">12</div>
<div class="c" style="left:345px;top:833px;width:34px;height:27px;background:#f2f2f2;border-color:#d9d9d9;justify-content:center;text-align:center;color:#111111;font-size:12px;padding:0 4px;padding-top:2px;">13a</div>
<div class="c" style="left:378px;top:305px;width:104px;height:46px;background:#ffffff;border-color:#d9d9d9;justify-content:flex-end;text-align:right;color:#111111;font-size:12px;padding:0 5px;padding-top:2px;">169911.50</div>
<div class="c" style="left:481px;top:305px;width:104px;height:46px;background:#ffffff;border-color:#d9d9d9;justify-content:flex-end;text-align:right;color:#111111;font-size:12px;padding:0 5px;padding-top:2px;">22088.50</div>
<div class="c" style="left:584px;top:305px;width:104px;height:46px;background:#ffffff;border-color:#d9d9d9;justify-content:flex-end;text-align:right;color:#111111;font-size:12px;padding:0 5px;padding-top:2px;">0</div>
<div class="c" style="left:687px;top:305px;width:104px;height:46px;background:#ffffff;border-color:#d9d9d9;justify-content:flex-end;text-align:right;color:#111111;font-size:12px;padding:0 5px;padding-top:2px;">0.00</div>
<div class="c" style="left:790px;top:305px;width:104px;height:46px;background:#ffffff;border-color:#d9d9d9;justify-content:flex-end;text-align:right;color:#111111;font-size:12px;padding:0 5px;padding-top:2px;">0</div>
<div class="c" style="left:893px;top:305px;width:104px;height:46px;background:#ffffff;border-color:#d9d9d9;justify-content:flex-end;text-align:right;color:#111111;font-size:12px;padding:0 5px;padding-top:2px;">0.00</div>
<div class="c" style="left:996px;top:305px;width:104px;height:46px;background:#ffffff;border-color:#d9d9d9;justify-content:flex-end;text-align:right;color:#111111;font-size:12px;padding:0 5px;padding-top:2px;"></div>
<div class="c" style="left:1099px;top:305px;width:104px;height:46px;background:#ffffff;border-color:#d9d9d9;justify-content:flex-end;text-align:right;color:#111111;font-size:12px;padding:0 5px;padding-top:2px;">0.00</div>
<div class="c" style="left:1202px;top:305px;width:104px;height:46px;background:#f2f2f2;border-color:#d9d9d9;justify-content:flex-end;text-align:right;color:#111111;font-size:12px;padding:0 5px;padding-top:2px;">169911.50</div>
<div class="c" style="left:1305px;top:305px;width:104px;height:46px;background:#f2f2f2;border-color:#d9d9d9;justify-content:flex-end;text-align:right;color:#111111;font-size:12px;padding:0 5px;padding-top:2px;">22088.50</div>
<div class="c" style="left:1408px;top:305px;width:104px;height:46px;background:#f2f2f2;border-color:#d9d9d9;justify-content:center;text-align:center;color:#111111;font-size:12px;padding:0 4px;"><span class="dash"></span></div>
<div class="c" style="left:1511px;top:305px;width:146px;height:46px;background:#f2f2f2;border-color:#d9d9d9;justify-content:center;text-align:center;color:#111111;font-size:12px;padding:0 4px;"><span class="dash"></span></div>
<div class="c" style="left:1656px;top:305px;width:104px;height:46px;background:#f2f2f2;border-color:#d9d9d9;justify-content:center;text-align:center;color:#111111;font-size:12px;padding:0 4px;"><span class="dash"></span></div>
<div class="c" style="left:1759px;top:305px;width:146px;height:46px;background:#f2f2f2;border-color:#d9d9d9;justify-content:flex-end;text-align:right;color:#111111;font-size:12px;padding:0 5px;padding-top:2px;"></div>
<div class="c" style="left:378px;top:350px;width:104px;height:46px;background:#ffffff;border-color:#d9d9d9;justify-content:flex-end;text-align:right;color:#111111;font-size:12px;padding:0 5px;padding-top:2px;">0</div>
<div class="c" style="left:481px;top:350px;width:104px;height:46px;background:#ffffff;border-color:#d9d9d9;justify-content:flex-end;text-align:right;color:#111111;font-size:12px;padding:0 5px;padding-top:2px;">0.00</div>
<div class="c" style="left:584px;top:350px;width:104px;height:46px;background:#ffffff;border-color:#d9d9d9;justify-content:flex-end;text-align:right;color:#111111;font-size:12px;padding:0 5px;padding-top:2px;">0</div>
<div class="c" style="left:687px;top:350px;width:104px;height:46px;background:#ffffff;border-color:#d9d9d9;justify-content:flex-end;text-align:right;color:#111111;font-size:12px;padding:0 5px;padding-top:2px;">0.00</div>
<div class="c" style="left:790px;top:350px;width:104px;height:46px;background:#ffffff;border-color:#d9d9d9;justify-content:flex-end;text-align:right;color:#111111;font-size:12px;padding:0 5px;padding-top:2px;">2000.00</div>
<div class="c" style="left:893px;top:350px;width:104px;height:46px;background:#ffffff;border-color:#d9d9d9;justify-content:flex-end;text-align:right;color:#111111;font-size:12px;padding:0 5px;padding-top:2px;">360.00</div>
<div class="c" style="left:996px;top:350px;width:104px;height:46px;background:#ffffff;border-color:#d9d9d9;justify-content:flex-end;text-align:right;color:#111111;font-size:12px;padding:0 5px;padding-top:2px;"></div>
<div class="c" style="left:1099px;top:350px;width:104px;height:46px;background:#ffffff;border-color:#d9d9d9;justify-content:flex-end;text-align:right;color:#111111;font-size:12px;padding:0 5px;padding-top:2px;">0.00</div>
<div class="c" style="left:1202px;top:350px;width:104px;height:46px;background:#f2f2f2;border-color:#d9d9d9;justify-content:flex-end;text-align:right;color:#111111;font-size:12px;padding:0 5px;padding-top:2px;">2000.00</div>
<div class="c" style="left:1305px;top:350px;width:104px;height:46px;background:#f2f2f2;border-color:#d9d9d9;justify-content:flex-end;text-align:right;color:#111111;font-size:12px;padding:0 5px;padding-top:2px;">360.00</div>
<div class="c" style="left:1408px;top:350px;width:104px;height:46px;background:#f2f2f2;border-color:#d9d9d9;justify-content:flex-end;text-align:right;color:#111111;font-size:12px;padding:0 5px;padding-top:2px;">2360.00</div>
<div class="c" style="left:1511px;top:350px;width:146px;height:46px;background:#ffffff;border-color:#d9d9d9;justify-content:flex-end;text-align:right;color:#111111;font-size:12px;padding:0 5px;padding-top:2px;">0</div>
<div class="c" style="left:1656px;top:350px;width:104px;height:46px;background:#f2f2f2;border-color:#d9d9d9;justify-content:flex-end;text-align:right;color:#111111;font-size:12px;padding:0 5px;padding-top:2px;">2360.00</div>
<div class="c" style="left:1759px;top:350px;width:146px;height:46px;background:#ffffff;border-color:#d9d9d9;justify-content:flex-end;text-align:right;color:#111111;font-size:12px;padding:0 5px;padding-top:2px;"></div>
<div class="c" style="left:378px;top:395px;width:104px;height:46px;background:#ffffff;border-color:#d9d9d9;justify-content:flex-end;text-align:right;color:#111111;font-size:12px;padding:0 5px;padding-top:2px;">91743.12</div>
<div class="c" style="left:481px;top:395px;width:104px;height:46px;background:#ffffff;border-color:#d9d9d9;justify-content:flex-end;text-align:right;color:#111111;font-size:12px;padding:0 5px;padding-top:2px;">8256.88</div>
<div class="c" style="left:584px;top:395px;width:104px;height:46px;background:#ffffff;border-color:#d9d9d9;justify-content:flex-end;text-align:right;color:#111111;font-size:12px;padding:0 5px;padding-top:2px;">10000.00</div>
<div class="c" style="left:687px;top:395px;width:104px;height:46px;background:#ffffff;border-color:#d9d9d9;justify-content:flex-end;text-align:right;color:#111111;font-size:12px;padding:0 5px;padding-top:2px;">900.00</div>
<div class="c" style="left:790px;top:395px;width:104px;height:46px;background:#ffffff;border-color:#d9d9d9;justify-content:flex-end;text-align:right;color:#111111;font-size:12px;padding:0 5px;padding-top:2px;">100.00</div>
<div class="c" style="left:893px;top:395px;width:104px;height:46px;background:#ffffff;border-color:#d9d9d9;justify-content:flex-end;text-align:right;color:#111111;font-size:12px;padding:0 5px;padding-top:2px;">9.00</div>
<div class="c" style="left:996px;top:395px;width:104px;height:46px;background:#ffffff;border-color:#d9d9d9;justify-content:flex-end;text-align:right;color:#111111;font-size:12px;padding:0 5px;padding-top:2px;"></div>
<div class="c" style="left:1099px;top:395px;width:104px;height:46px;background:#ffffff;border-color:#d9d9d9;justify-content:flex-end;text-align:right;color:#111111;font-size:12px;padding:0 5px;padding-top:2px;">0.00</div>
<div class="c" style="left:1202px;top:395px;width:104px;height:46px;background:#f2f2f2;border-color:#d9d9d9;justify-content:flex-end;text-align:right;color:#111111;font-size:12px;padding:0 5px;padding-top:2px;">101843.12</div>
<div class="c" style="left:1305px;top:395px;width:104px;height:46px;background:#f2f2f2;border-color:#d9d9d9;justify-content:flex-end;text-align:right;color:#111111;font-size:12px;padding:0 5px;padding-top:2px;">9165.88</div>
<div class="c" style="left:1408px;top:395px;width:104px;height:46px;background:#f2f2f2;border-color:#d9d9d9;justify-content:center;text-align:center;color:#111111;font-size:12px;padding:0 4px;"><span class="dash"></span></div>
<div class="c" style="left:1511px;top:395px;width:146px;height:46px;background:#f2f2f2;border-color:#d9d9d9;justify-content:center;text-align:center;color:#111111;font-size:12px;padding:0 4px;"><span class="dash"></span></div>
<div class="c" style="left:1656px;top:395px;width:104px;height:46px;background:#f2f2f2;border-color:#d9d9d9;justify-content:center;text-align:center;color:#111111;font-size:12px;padding:0 4px;"><span class="dash"></span></div>
<div class="c" style="left:1759px;top:395px;width:146px;height:46px;background:#f2f2f2;border-color:#d9d9d9;justify-content:flex-end;text-align:right;color:#111111;font-size:12px;padding:0 5px;padding-top:2px;"></div>
<div class="c" style="left:378px;top:440px;width:104px;height:46px;background:#ffffff;border-color:#d9d9d9;justify-content:flex-end;text-align:right;color:#111111;font-size:12px;padding:0 5px;padding-top:2px;">0</div>
<div class="c" style="left:481px;top:440px;width:104px;height:46px;background:#ffffff;border-color:#d9d9d9;justify-content:flex-end;text-align:right;color:#111111;font-size:12px;padding:0 5px;padding-top:2px;">0.00</div>
<div class="c" style="left:584px;top:440px;width:104px;height:46px;background:#ffffff;border-color:#d9d9d9;justify-content:flex-end;text-align:right;color:#111111;font-size:12px;padding:0 5px;padding-top:2px;">3000.00</div>
<div class="c" style="left:687px;top:440px;width:104px;height:46px;background:#ffffff;border-color:#d9d9d9;justify-content:flex-end;text-align:right;color:#111111;font-size:12px;padding:0 5px;padding-top:2px;">270.00</div>
<div class="c" style="left:790px;top:440px;width:104px;height:46px;background:#ffffff;border-color:#d9d9d9;justify-content:flex-end;text-align:right;color:#111111;font-size:12px;padding:0 5px;padding-top:2px;">0</div>
<div class="c" style="left:893px;top:440px;width:104px;height:46px;background:#ffffff;border-color:#d9d9d9;justify-content:flex-end;text-align:right;color:#111111;font-size:12px;padding:0 5px;padding-top:2px;">0.00</div>
<div class="c" style="left:996px;top:440px;width:104px;height:46px;background:#ffffff;border-color:#d9d9d9;justify-content:flex-end;text-align:right;color:#111111;font-size:12px;padding:0 5px;padding-top:2px;"></div>
<div class="c" style="left:1099px;top:440px;width:104px;height:46px;background:#ffffff;border-color:#d9d9d9;justify-content:flex-end;text-align:right;color:#111111;font-size:12px;padding:0 5px;padding-top:2px;">0.00</div>
<div class="c" style="left:1202px;top:440px;width:104px;height:46px;background:#f2f2f2;border-color:#d9d9d9;justify-content:flex-end;text-align:right;color:#111111;font-size:12px;padding:0 5px;padding-top:2px;">3000.00</div>
<div class="c" style="left:1305px;top:440px;width:104px;height:46px;background:#f2f2f2;border-color:#d9d9d9;justify-content:flex-end;text-align:right;color:#111111;font-size:12px;padding:0 5px;padding-top:2px;">270.00</div>
<div class="c" style="left:1408px;top:440px;width:104px;height:46px;background:#f2f2f2;border-color:#d9d9d9;justify-content:flex-end;text-align:right;color:#111111;font-size:12px;padding:0 5px;padding-top:2px;">3270.00</div>
<div class="c" style="left:1511px;top:440px;width:146px;height:46px;background:#ffffff;border-color:#d9d9d9;justify-content:flex-end;text-align:right;color:#111111;font-size:12px;padding:0 5px;padding-top:2px;">0</div>
<div class="c" style="left:1656px;top:440px;width:104px;height:46px;background:#f2f2f2;border-color:#d9d9d9;justify-content:flex-end;text-align:right;color:#111111;font-size:12px;padding:0 5px;padding-top:2px;">3270.00</div>
<div class="c" style="left:1759px;top:440px;width:146px;height:46px;background:#ffffff;border-color:#d9d9d9;justify-content:flex-end;text-align:right;color:#111111;font-size:12px;padding:0 5px;padding-top:2px;"></div>
<div class="c" style="left:378px;top:485px;width:104px;height:27px;background:#ffffff;border-color:#d9d9d9;justify-content:flex-end;text-align:right;color:#111111;font-size:12px;padding:0 5px;padding-top:2px;">0</div>
<div class="c" style="left:481px;top:485px;width:104px;height:27px;background:#ffffff;border-color:#d9d9d9;justify-content:flex-end;text-align:right;color:#111111;font-size:12px;padding:0 5px;padding-top:2px;">0.00</div>
<div class="c" style="left:584px;top:485px;width:104px;height:27px;background:#ffffff;border-color:#d9d9d9;justify-content:flex-end;text-align:right;color:#111111;font-size:12px;padding:0 5px;padding-top:2px;">0</div>
<div class="c" style="left:687px;top:485px;width:104px;height:27px;background:#ffffff;border-color:#d9d9d9;justify-content:flex-end;text-align:right;color:#111111;font-size:12px;padding:0 5px;padding-top:2px;">0.00</div>
<div class="c" style="left:790px;top:485px;width:104px;height:27px;background:#ffffff;border-color:#d9d9d9;justify-content:flex-end;text-align:right;color:#111111;font-size:12px;padding:0 5px;padding-top:2px;">0</div>
<div class="c" style="left:893px;top:485px;width:104px;height:27px;background:#ffffff;border-color:#d9d9d9;justify-content:flex-end;text-align:right;color:#111111;font-size:12px;padding:0 5px;padding-top:2px;">0.00</div>
<div class="c" style="left:996px;top:485px;width:104px;height:27px;background:#ffffff;border-color:#d9d9d9;justify-content:flex-end;text-align:right;color:#111111;font-size:12px;padding:0 5px;padding-top:2px;"></div>
<div class="c" style="left:1099px;top:485px;width:104px;height:27px;background:#ffffff;border-color:#d9d9d9;justify-content:flex-end;text-align:right;color:#111111;font-size:12px;padding:0 5px;padding-top:2px;">0.00</div>
<div class="c" style="left:1202px;top:485px;width:104px;height:27px;background:#f2f2f2;border-color:#d9d9d9;justify-content:flex-end;text-align:right;color:#111111;font-size:12px;padding:0 5px;padding-top:2px;">0</div>
<div class="c" style="left:1305px;top:485px;width:104px;height:27px;background:#f2f2f2;border-color:#d9d9d9;justify-content:flex-end;text-align:right;color:#111111;font-size:12px;padding:0 5px;padding-top:2px;">0.00</div>
<div class="c" style="left:1408px;top:485px;width:104px;height:27px;background:#f2f2f2;border-color:#d9d9d9;justify-content:flex-end;text-align:right;color:#111111;font-size:12px;padding:0 5px;padding-top:2px;">0.00</div>
<div class="c" style="left:1511px;top:485px;width:146px;height:27px;background:#ffffff;border-color:#d9d9d9;justify-content:flex-end;text-align:right;color:#111111;font-size:12px;padding:0 5px;padding-top:2px;">0</div>
<div class="c" style="left:1656px;top:485px;width:104px;height:27px;background:#f2f2f2;border-color:#d9d9d9;justify-content:flex-end;text-align:right;color:#111111;font-size:12px;padding:0 5px;padding-top:2px;">0.00</div>
<div class="c" style="left:1759px;top:485px;width:146px;height:27px;background:#ffffff;border-color:#d9d9d9;justify-content:flex-end;text-align:right;color:#111111;font-size:12px;padding:0 5px;padding-top:2px;"></div>
<div class="c" style="left:378px;top:511px;width:104px;height:46px;background:#f2f2f2;border-color:#d9d9d9;justify-content:center;text-align:center;color:#111111;font-size:12px;padding:0 4px;"><span class="dash"></span></div>
<div class="c" style="left:481px;top:511px;width:104px;height:46px;background:#f2f2f2;border-color:#d9d9d9;justify-content:center;text-align:center;color:#111111;font-size:12px;padding:0 4px;"><span class="dash"></span></div>
<div class="c" style="left:584px;top:511px;width:104px;height:46px;background:#f2f2f2;border-color:#d9d9d9;justify-content:center;text-align:center;color:#111111;font-size:12px;padding:0 4px;"><span class="dash"></span></div>
<div class="c" style="left:687px;top:511px;width:104px;height:46px;background:#f2f2f2;border-color:#d9d9d9;justify-content:center;text-align:center;color:#111111;font-size:12px;padding:0 4px;"><span class="dash"></span></div>
<div class="c" style="left:790px;top:511px;width:104px;height:46px;background:#f2f2f2;border-color:#d9d9d9;justify-content:center;text-align:center;color:#111111;font-size:12px;padding:0 4px;"><span class="dash"></span></div>
<div class="c" style="left:893px;top:511px;width:104px;height:46px;background:#f2f2f2;border-color:#d9d9d9;justify-content:center;text-align:center;color:#111111;font-size:12px;padding:0 4px;"><span class="dash"></span></div>
<div class="c" style="left:996px;top:511px;width:104px;height:46px;background:#f2f2f2;border-color:#d9d9d9;justify-content:center;text-align:center;color:#111111;font-size:12px;padding:0 4px;"><span class="dash"></span></div>
<div class="c" style="left:1099px;top:511px;width:104px;height:46px;background:#f2f2f2;border-color:#d9d9d9;justify-content:center;text-align:center;color:#111111;font-size:12px;padding:0 4px;"><span class="dash"></span></div>
<div class="c" style="left:1202px;top:511px;width:104px;height:46px;background:#ffffff;border-color:#d9d9d9;justify-content:flex-end;text-align:right;color:#111111;font-size:12px;padding:0 5px;padding-top:2px;">0</div>
<div class="c" style="left:1305px;top:511px;width:104px;height:46px;background:#ffffff;border-color:#d9d9d9;justify-content:flex-end;text-align:right;color:#111111;font-size:12px;padding:0 5px;padding-top:2px;">0</div>
<div class="c" style="left:1408px;top:511px;width:104px;height:46px;background:#f2f2f2;border-color:#d9d9d9;justify-content:center;text-align:center;color:#111111;font-size:12px;padding:0 4px;"><span class="dash"></span></div>
<div class="c" style="left:1511px;top:511px;width:146px;height:46px;background:#f2f2f2;border-color:#d9d9d9;justify-content:center;text-align:center;color:#111111;font-size:12px;padding:0 4px;"><span class="dash"></span></div>
<div class="c" style="left:1656px;top:511px;width:104px;height:46px;background:#f2f2f2;border-color:#d9d9d9;justify-content:center;text-align:center;color:#111111;font-size:12px;padding:0 4px;"><span class="dash"></span></div>
<div class="c" style="left:1759px;top:511px;width:146px;height:46px;background:#f2f2f2;border-color:#d9d9d9;justify-content:flex-end;text-align:right;color:#111111;font-size:12px;padding:0 5px;padding-top:2px;"></div>
<div class="c" style="left:378px;top:556px;width:104px;height:46px;background:#f2f2f2;border-color:#d9d9d9;justify-content:center;text-align:center;color:#111111;font-size:12px;padding:0 4px;"><span class="dash"></span></div>
<div class="c" style="left:481px;top:556px;width:104px;height:46px;background:#f2f2f2;border-color:#d9d9d9;justify-content:center;text-align:center;color:#111111;font-size:12px;padding:0 4px;"><span class="dash"></span></div>
<div class="c" style="left:584px;top:556px;width:104px;height:46px;background:#f2f2f2;border-color:#d9d9d9;justify-content:center;text-align:center;color:#111111;font-size:12px;padding:0 4px;"><span class="dash"></span></div>
<div class="c" style="left:687px;top:556px;width:104px;height:46px;background:#f2f2f2;border-color:#d9d9d9;justify-content:center;text-align:center;color:#111111;font-size:12px;padding:0 4px;"><span class="dash"></span></div>
<div class="c" style="left:790px;top:556px;width:104px;height:46px;background:#f2f2f2;border-color:#d9d9d9;justify-content:center;text-align:center;color:#111111;font-size:12px;padding:0 4px;"><span class="dash"></span></div>
<div class="c" style="left:893px;top:556px;width:104px;height:46px;background:#f2f2f2;border-color:#d9d9d9;justify-content:center;text-align:center;color:#111111;font-size:12px;padding:0 4px;"><span class="dash"></span></div>
<div class="c" style="left:996px;top:556px;width:104px;height:46px;background:#f2f2f2;border-color:#d9d9d9;justify-content:center;text-align:center;color:#111111;font-size:12px;padding:0 4px;"><span class="dash"></span></div>
<div class="c" style="left:1099px;top:556px;width:104px;height:46px;background:#f2f2f2;border-color:#d9d9d9;justify-content:center;text-align:center;color:#111111;font-size:12px;padding:0 4px;"><span class="dash"></span></div>
<div class="c" style="left:1202px;top:556px;width:104px;height:46px;background:#ffffff;border-color:#d9d9d9;justify-content:flex-end;text-align:right;color:#111111;font-size:12px;padding:0 5px;padding-top:2px;">0</div>
<div class="c" style="left:1305px;top:556px;width:104px;height:46px;background:#ffffff;border-color:#d9d9d9;justify-content:flex-end;text-align:right;color:#111111;font-size:12px;padding:0 5px;padding-top:2px;">0</div>
<div class="c" style="left:1408px;top:556px;width:104px;height:46px;background:#f2f2f2;border-color:#d9d9d9;justify-content:flex-end;text-align:right;color:#111111;font-size:12px;padding:0 5px;padding-top:2px;">0</div>
<div class="c" style="left:1511px;top:556px;width:146px;height:46px;background:#ffffff;border-color:#d9d9d9;justify-content:flex-end;text-align:right;color:#111111;font-size:12px;padding:0 5px;padding-top:2px;"></div>
<div class="c" style="left:1656px;top:556px;width:104px;height:46px;background:#f2f2f2;border-color:#d9d9d9;justify-content:flex-end;text-align:right;color:#111111;font-size:12px;padding:0 5px;padding-top:2px;">0</div>
<div class="c" style="left:1759px;top:556px;width:146px;height:46px;background:#ffffff;border-color:#d9d9d9;justify-content:flex-end;text-align:right;color:#111111;font-size:12px;padding:0 5px;padding-top:2px;"></div>
<div class="c" style="left:378px;top:601px;width:104px;height:27px;background:#ffffff;border-color:#d9d9d9;justify-content:flex-end;text-align:right;color:#111111;font-size:12px;padding:0 5px;padding-top:2px;">0</div>
<div class="c" style="left:481px;top:601px;width:104px;height:27px;background:#ffffff;border-color:#d9d9d9;justify-content:flex-end;text-align:right;color:#111111;font-size:12px;padding:0 5px;padding-top:2px;">0.00</div>
<div class="c" style="left:584px;top:601px;width:104px;height:27px;background:#ffffff;border-color:#d9d9d9;justify-content:flex-end;text-align:right;color:#111111;font-size:12px;padding:0 5px;padding-top:2px;">0</div>
<div class="c" style="left:687px;top:601px;width:104px;height:27px;background:#ffffff;border-color:#d9d9d9;justify-content:flex-end;text-align:right;color:#111111;font-size:12px;padding:0 5px;padding-top:2px;">0.00</div>
<div class="c" style="left:790px;top:601px;width:104px;height:27px;background:#ffffff;border-color:#d9d9d9;justify-content:flex-end;text-align:right;color:#111111;font-size:12px;padding:0 5px;padding-top:2px;">0</div>
<div class="c" style="left:893px;top:601px;width:104px;height:27px;background:#ffffff;border-color:#d9d9d9;justify-content:flex-end;text-align:right;color:#111111;font-size:12px;padding:0 5px;padding-top:2px;">0.00</div>
<div class="c" style="left:996px;top:601px;width:104px;height:27px;background:#f2f2f2;border-color:#d9d9d9;justify-content:center;text-align:center;color:#111111;font-size:12px;padding:0 4px;"><span class="dash"></span></div>
<div class="c" style="left:1099px;top:601px;width:104px;height:27px;background:#f2f2f2;border-color:#d9d9d9;justify-content:center;text-align:center;color:#111111;font-size:12px;padding:0 4px;"><span class="dash"></span></div>
<div class="c" style="left:1202px;top:601px;width:104px;height:27px;background:#f2f2f2;border-color:#d9d9d9;justify-content:flex-end;text-align:right;color:#111111;font-size:12px;padding:0 5px;padding-top:2px;">0</div>
<div class="c" style="left:1305px;top:601px;width:104px;height:27px;background:#f2f2f2;border-color:#d9d9d9;justify-content:flex-end;text-align:right;color:#111111;font-size:12px;padding:0 5px;padding-top:2px;">0.00</div>
<div class="c" style="left:1408px;top:601px;width:104px;height:27px;background:#f2f2f2;border-color:#d9d9d9;justify-content:center;text-align:center;color:#111111;font-size:12px;padding:0 4px;"><span class="dash"></span></div>
<div class="c" style="left:1511px;top:601px;width:146px;height:27px;background:#f2f2f2;border-color:#d9d9d9;justify-content:center;text-align:center;color:#111111;font-size:12px;padding:0 4px;"><span class="dash"></span></div>
<div class="c" style="left:1656px;top:601px;width:104px;height:27px;background:#f2f2f2;border-color:#d9d9d9;justify-content:center;text-align:center;color:#111111;font-size:12px;padding:0 4px;"><span class="dash"></span></div>
<div class="c" style="left:1759px;top:601px;width:146px;height:27px;background:#f2f2f2;border-color:#d9d9d9;justify-content:flex-end;text-align:right;color:#111111;font-size:12px;padding:0 5px;padding-top:2px;"></div>
<div class="c" style="left:378px;top:627px;width:104px;height:46px;background:#ffffff;border-color:#d9d9d9;justify-content:flex-end;text-align:right;color:#111111;font-size:12px;padding:0 5px;padding-top:2px;">0</div>
<div class="c" style="left:481px;top:627px;width:104px;height:46px;background:#ffffff;border-color:#d9d9d9;justify-content:flex-end;text-align:right;color:#111111;font-size:12px;padding:0 5px;padding-top:2px;">0.00</div>
<div class="c" style="left:584px;top:627px;width:104px;height:46px;background:#ffffff;border-color:#d9d9d9;justify-content:flex-end;text-align:right;color:#111111;font-size:12px;padding:0 5px;padding-top:2px;">0</div>
<div class="c" style="left:687px;top:627px;width:104px;height:46px;background:#ffffff;border-color:#d9d9d9;justify-content:flex-end;text-align:right;color:#111111;font-size:12px;padding:0 5px;padding-top:2px;">0.00</div>
<div class="c" style="left:790px;top:627px;width:104px;height:46px;background:#ffffff;border-color:#d9d9d9;justify-content:flex-end;text-align:right;color:#111111;font-size:12px;padding:0 5px;padding-top:2px;">0</div>
<div class="c" style="left:893px;top:627px;width:104px;height:46px;background:#ffffff;border-color:#d9d9d9;justify-content:flex-end;text-align:right;color:#111111;font-size:12px;padding:0 5px;padding-top:2px;">0.00</div>
<div class="c" style="left:996px;top:627px;width:104px;height:46px;background:#f2f2f2;border-color:#d9d9d9;justify-content:center;text-align:center;color:#111111;font-size:12px;padding:0 4px;"><span class="dash"></span></div>
<div class="c" style="left:1099px;top:627px;width:104px;height:46px;background:#f2f2f2;border-color:#d9d9d9;justify-content:center;text-align:center;color:#111111;font-size:12px;padding:0 4px;"><span class="dash"></span></div>
<div class="c" style="left:1202px;top:627px;width:104px;height:46px;background:#f2f2f2;border-color:#d9d9d9;justify-content:flex-end;text-align:right;color:#111111;font-size:12px;padding:0 5px;padding-top:2px;">0</div>
<div class="c" style="left:1305px;top:627px;width:104px;height:46px;background:#f2f2f2;border-color:#d9d9d9;justify-content:flex-end;text-align:right;color:#111111;font-size:12px;padding:0 5px;padding-top:2px;">0.00</div>
<div class="c" style="left:1408px;top:627px;width:104px;height:46px;background:#f2f2f2;border-color:#d9d9d9;justify-content:center;text-align:center;color:#111111;font-size:12px;padding:0 4px;"><span class="dash"></span></div>
<div class="c" style="left:1511px;top:627px;width:146px;height:46px;background:#f2f2f2;border-color:#d9d9d9;justify-content:center;text-align:center;color:#111111;font-size:12px;padding:0 4px;"><span class="dash"></span></div>
<div class="c" style="left:1656px;top:627px;width:104px;height:46px;background:#f2f2f2;border-color:#d9d9d9;justify-content:center;text-align:center;color:#111111;font-size:12px;padding:0 4px;"><span class="dash"></span></div>
<div class="c" style="left:1759px;top:627px;width:146px;height:46px;background:#f2f2f2;border-color:#d9d9d9;justify-content:flex-end;text-align:right;color:#111111;font-size:12px;padding:0 5px;padding-top:2px;"></div>
<div class="c" style="left:378px;top:717px;width:104px;height:27px;background:#ffffff;border-color:#d9d9d9;justify-content:flex-end;text-align:right;color:#111111;font-size:12px;padding:0 5px;padding-top:2px;">0</div>
<div class="c" style="left:481px;top:717px;width:104px;height:27px;background:#ffffff;border-color:#d9d9d9;justify-content:flex-end;text-align:right;color:#111111;font-size:12px;padding:0 5px;padding-top:2px;">0.00</div>
<div class="c" style="left:584px;top:717px;width:104px;height:27px;background:#ffffff;border-color:#d9d9d9;justify-content:flex-end;text-align:right;color:#111111;font-size:12px;padding:0 5px;padding-top:2px;">0</div>
<div class="c" style="left:687px;top:717px;width:104px;height:27px;background:#ffffff;border-color:#d9d9d9;justify-content:flex-end;text-align:right;color:#111111;font-size:12px;padding:0 5px;padding-top:2px;">0.00</div>
<div class="c" style="left:790px;top:717px;width:104px;height:27px;background:#ffffff;border-color:#d9d9d9;justify-content:flex-end;text-align:right;color:#111111;font-size:12px;padding:0 5px;padding-top:2px;">0</div>
<div class="c" style="left:893px;top:717px;width:104px;height:27px;background:#ffffff;border-color:#d9d9d9;justify-content:flex-end;text-align:right;color:#111111;font-size:12px;padding:0 5px;padding-top:2px;">0.00</div>
<div class="c" style="left:996px;top:717px;width:104px;height:27px;background:#f2f2f2;border-color:#d9d9d9;justify-content:center;text-align:center;color:#111111;font-size:12px;padding:0 4px;"><span class="dash"></span></div>
<div class="c" style="left:1099px;top:717px;width:104px;height:27px;background:#f2f2f2;border-color:#d9d9d9;justify-content:center;text-align:center;color:#111111;font-size:12px;padding:0 4px;"><span class="dash"></span></div>
<div class="c" style="left:1202px;top:717px;width:104px;height:27px;background:#f2f2f2;border-color:#d9d9d9;justify-content:flex-end;text-align:right;color:#111111;font-size:12px;padding:0 5px;padding-top:2px;">0</div>
<div class="c" style="left:1305px;top:717px;width:104px;height:27px;background:#f2f2f2;border-color:#d9d9d9;justify-content:flex-end;text-align:right;color:#111111;font-size:12px;padding:0 5px;padding-top:2px;">0.00</div>
<div class="c" style="left:1408px;top:717px;width:104px;height:27px;background:#f2f2f2;border-color:#d9d9d9;justify-content:center;text-align:center;color:#111111;font-size:12px;padding:0 4px;"><span class="dash"></span></div>
<div class="c" style="left:1511px;top:717px;width:146px;height:27px;background:#f2f2f2;border-color:#d9d9d9;justify-content:center;text-align:center;color:#111111;font-size:12px;padding:0 4px;"><span class="dash"></span></div>
<div class="c" style="left:1656px;top:717px;width:104px;height:27px;background:#f2f2f2;border-color:#d9d9d9;justify-content:center;text-align:center;color:#111111;font-size:12px;padding:0 4px;"><span class="dash"></span></div>
<div class="c" style="left:1759px;top:717px;width:146px;height:27px;background:#f2f2f2;border-color:#d9d9d9;justify-content:flex-end;text-align:right;color:#111111;font-size:12px;padding:0 5px;padding-top:2px;"></div>
<div class="c" style="left:378px;top:743px;width:104px;height:46px;background:#ffffff;border-color:#d9d9d9;justify-content:flex-end;text-align:right;color:#111111;font-size:12px;padding:0 5px;padding-top:2px;">0</div>
<div class="c" style="left:481px;top:743px;width:104px;height:46px;background:#ffffff;border-color:#d9d9d9;justify-content:flex-end;text-align:right;color:#111111;font-size:12px;padding:0 5px;padding-top:2px;">0.00</div>
<div class="c" style="left:584px;top:743px;width:104px;height:46px;background:#ffffff;border-color:#d9d9d9;justify-content:flex-end;text-align:right;color:#111111;font-size:12px;padding:0 5px;padding-top:2px;">0</div>
<div class="c" style="left:687px;top:743px;width:104px;height:46px;background:#ffffff;border-color:#d9d9d9;justify-content:flex-end;text-align:right;color:#111111;font-size:12px;padding:0 5px;padding-top:2px;">0.00</div>
<div class="c" style="left:790px;top:743px;width:104px;height:46px;background:#ffffff;border-color:#d9d9d9;justify-content:flex-end;text-align:right;color:#111111;font-size:12px;padding:0 5px;padding-top:2px;">0</div>
<div class="c" style="left:893px;top:743px;width:104px;height:46px;background:#ffffff;border-color:#d9d9d9;justify-content:flex-end;text-align:right;color:#111111;font-size:12px;padding:0 5px;padding-top:2px;">0.00</div>
<div class="c" style="left:996px;top:743px;width:104px;height:46px;background:#f2f2f2;border-color:#d9d9d9;justify-content:center;text-align:center;color:#111111;font-size:12px;padding:0 4px;"><span class="dash"></span></div>
<div class="c" style="left:1099px;top:743px;width:104px;height:46px;background:#f2f2f2;border-color:#d9d9d9;justify-content:center;text-align:center;color:#111111;font-size:12px;padding:0 4px;"><span class="dash"></span></div>
<div class="c" style="left:1202px;top:743px;width:104px;height:46px;background:#f2f2f2;border-color:#d9d9d9;justify-content:flex-end;text-align:right;color:#111111;font-size:12px;padding:0 5px;padding-top:2px;">0</div>
<div class="c" style="left:1305px;top:743px;width:104px;height:46px;background:#f2f2f2;border-color:#d9d9d9;justify-content:flex-end;text-align:right;color:#111111;font-size:12px;padding:0 5px;padding-top:2px;">0.00</div>
<div class="c" style="left:1408px;top:743px;width:104px;height:46px;background:#f2f2f2;border-color:#d9d9d9;justify-content:center;text-align:center;color:#111111;font-size:12px;padding:0 4px;"><span class="dash"></span></div>
<div class="c" style="left:1511px;top:743px;width:146px;height:46px;background:#f2f2f2;border-color:#d9d9d9;justify-content:center;text-align:center;color:#111111;font-size:12px;padding:0 4px;"><span class="dash"></span></div>
<div class="c" style="left:1656px;top:743px;width:104px;height:46px;background:#f2f2f2;border-color:#d9d9d9;justify-content:center;text-align:center;color:#111111;font-size:12px;padding:0 4px;"><span class="dash"></span></div>
<div class="c" style="left:1759px;top:743px;width:146px;height:46px;background:#f2f2f2;border-color:#d9d9d9;justify-content:flex-end;text-align:right;color:#111111;font-size:12px;padding:0 5px;padding-top:2px;"></div>
<div class="c" style="left:378px;top:672px;width:104px;height:46px;background:#ffffff;border-color:#d9d9d9;justify-content:flex-end;text-align:right;color:#111111;font-size:12px;padding:0 5px;padding-top:2px;">0</div>
<div class="c" style="left:481px;top:672px;width:104px;height:46px;background:#ffffff;border-color:#d9d9d9;justify-content:flex-end;text-align:right;color:#111111;font-size:12px;padding:0 5px;padding-top:2px;">0.00</div>
<div class="c" style="left:584px;top:672px;width:104px;height:46px;background:#ffffff;border-color:#d9d9d9;justify-content:flex-end;text-align:right;color:#111111;font-size:12px;padding:0 5px;padding-top:2px;">0</div>
<div class="c" style="left:687px;top:672px;width:104px;height:46px;background:#ffffff;border-color:#d9d9d9;justify-content:flex-end;text-align:right;color:#111111;font-size:12px;padding:0 5px;padding-top:2px;">0.00</div>
<div class="c" style="left:790px;top:672px;width:104px;height:46px;background:#ffffff;border-color:#d9d9d9;justify-content:flex-end;text-align:right;color:#111111;font-size:12px;padding:0 5px;padding-top:2px;">0</div>
<div class="c" style="left:893px;top:672px;width:104px;height:46px;background:#ffffff;border-color:#d9d9d9;justify-content:flex-end;text-align:right;color:#111111;font-size:12px;padding:0 5px;padding-top:2px;">0.00</div>
<div class="c" style="left:996px;top:672px;width:104px;height:46px;background:#f2f2f2;border-color:#d9d9d9;justify-content:center;text-align:center;color:#111111;font-size:12px;padding:0 4px;"><span class="dash"></span></div>
<div class="c" style="left:1099px;top:672px;width:104px;height:46px;background:#f2f2f2;border-color:#d9d9d9;justify-content:center;text-align:center;color:#111111;font-size:12px;padding:0 4px;"><span class="dash"></span></div>
<div class="c" style="left:1202px;top:672px;width:104px;height:46px;background:#f2f2f2;border-color:#d9d9d9;justify-content:flex-end;text-align:right;color:#111111;font-size:12px;padding:0 5px;padding-top:2px;">0</div>
<div class="c" style="left:1305px;top:672px;width:104px;height:46px;background:#f2f2f2;border-color:#d9d9d9;justify-content:flex-end;text-align:right;color:#111111;font-size:12px;padding:0 5px;padding-top:2px;">0.00</div>
<div class="c" style="left:1408px;top:672px;width:104px;height:46px;background:#f2f2f2;border-color:#d9d9d9;justify-content:flex-end;text-align:right;color:#111111;font-size:12px;padding:0 5px;padding-top:2px;">0.00</div>
<div class="c" style="left:1511px;top:672px;width:146px;height:46px;background:#ffffff;border-color:#d9d9d9;justify-content:flex-end;text-align:right;color:#111111;font-size:12px;padding:0 5px;padding-top:2px;">0</div>
<div class="c" style="left:1656px;top:672px;width:104px;height:46px;background:#f2f2f2;border-color:#d9d9d9;justify-content:flex-end;text-align:right;color:#111111;font-size:12px;padding:0 5px;padding-top:2px;">0.00</div>
<div class="c" style="left:1759px;top:672px;width:146px;height:46px;background:#ffffff;border-color:#d9d9d9;justify-content:flex-end;text-align:right;color:#111111;font-size:12px;padding:0 5px;padding-top:2px;"></div>
<div class="c" style="left:378px;top:788px;width:104px;height:46px;background:#ffffff;border-color:#d9d9d9;justify-content:flex-end;text-align:right;color:#111111;font-size:12px;padding:0 5px;padding-top:2px;">0</div>
<div class="c" style="left:481px;top:788px;width:104px;height:46px;background:#ffffff;border-color:#d9d9d9;justify-content:flex-end;text-align:right;color:#111111;font-size:12px;padding:0 5px;padding-top:2px;">0.00</div>
<div class="c" style="left:584px;top:788px;width:104px;height:46px;background:#ffffff;border-color:#d9d9d9;justify-content:flex-end;text-align:right;color:#111111;font-size:12px;padding:0 5px;padding-top:2px;">0</div>
<div class="c" style="left:687px;top:788px;width:104px;height:46px;background:#ffffff;border-color:#d9d9d9;justify-content:flex-end;text-align:right;color:#111111;font-size:12px;padding:0 5px;padding-top:2px;">0.00</div>
<div class="c" style="left:790px;top:788px;width:104px;height:46px;background:#ffffff;border-color:#d9d9d9;justify-content:flex-end;text-align:right;color:#111111;font-size:12px;padding:0 5px;padding-top:2px;">0</div>
<div class="c" style="left:893px;top:788px;width:104px;height:46px;background:#ffffff;border-color:#d9d9d9;justify-content:flex-end;text-align:right;color:#111111;font-size:12px;padding:0 5px;padding-top:2px;">0.00</div>
<div class="c" style="left:996px;top:788px;width:104px;height:46px;background:#f2f2f2;border-color:#d9d9d9;justify-content:center;text-align:center;color:#111111;font-size:12px;padding:0 4px;"><span class="dash"></span></div>
<div class="c" style="left:1099px;top:788px;width:104px;height:46px;background:#f2f2f2;border-color:#d9d9d9;justify-content:center;text-align:center;color:#111111;font-size:12px;padding:0 4px;"><span class="dash"></span></div>
<div class="c" style="left:1202px;top:788px;width:104px;height:46px;background:#f2f2f2;border-color:#d9d9d9;justify-content:flex-end;text-align:right;color:#111111;font-size:12px;padding:0 5px;padding-top:2px;">0</div>
<div class="c" style="left:1305px;top:788px;width:104px;height:46px;background:#f2f2f2;border-color:#d9d9d9;justify-content:flex-end;text-align:right;color:#111111;font-size:12px;padding:0 5px;padding-top:2px;">0.00</div>
<div class="c" style="left:1408px;top:788px;width:104px;height:46px;background:#f2f2f2;border-color:#d9d9d9;justify-content:flex-end;text-align:right;color:#111111;font-size:12px;padding:0 5px;padding-top:2px;">0.00</div>
<div class="c" style="left:1511px;top:788px;width:146px;height:46px;background:#ffffff;border-color:#d9d9d9;justify-content:flex-end;text-align:right;color:#111111;font-size:12px;padding:0 5px;padding-top:2px;">0</div>
<div class="c" style="left:1656px;top:788px;width:104px;height:46px;background:#f2f2f2;border-color:#d9d9d9;justify-content:flex-end;text-align:right;color:#111111;font-size:12px;padding:0 5px;padding-top:2px;">0.00</div>
<div class="c" style="left:1759px;top:788px;width:146px;height:46px;background:#ffffff;border-color:#d9d9d9;justify-content:flex-end;text-align:right;color:#111111;font-size:12px;padding:0 5px;padding-top:2px;"></div>
<div class="c" style="left:378px;top:833px;width:104px;height:27px;background:#ffffff;border-color:#d9d9d9;justify-content:flex-end;text-align:right;color:#111111;font-size:12px;padding:0 5px;padding-top:2px;"></div>
<div class="c" style="left:481px;top:833px;width:104px;height:27px;background:#ffffff;border-color:#d9d9d9;justify-content:flex-end;text-align:right;color:#111111;font-size:12px;padding:0 5px;padding-top:2px;"></div>
<div class="c" style="left:584px;top:833px;width:104px;height:27px;background:#ffffff;border-color:#d9d9d9;justify-content:flex-end;text-align:right;color:#111111;font-size:12px;padding:0 5px;padding-top:2px;"></div>
<div class="c" style="left:687px;top:833px;width:104px;height:27px;background:#ffffff;border-color:#d9d9d9;justify-content:flex-end;text-align:right;color:#111111;font-size:12px;padding:0 5px;padding-top:2px;"></div>
<div class="c" style="left:790px;top:833px;width:104px;height:27px;background:#ffffff;border-color:#d9d9d9;justify-content:flex-end;text-align:right;color:#111111;font-size:12px;padding:0 5px;padding-top:2px;"></div>
<div class="c" style="left:893px;top:833px;width:104px;height:27px;background:#ffffff;border-color:#d9d9d9;justify-content:flex-end;text-align:right;color:#111111;font-size:12px;padding:0 5px;padding-top:2px;"></div>
<div class="c" style="left:996px;top:833px;width:104px;height:27px;background:#f2f2f2;border-color:#d9d9d9;justify-content:center;text-align:center;color:#111111;font-size:12px;padding:0 4px;"><span class="dash"></span></div>
<div class="c" style="left:1099px;top:833px;width:104px;height:27px;background:#f2f2f2;border-color:#d9d9d9;justify-content:center;text-align:center;color:#111111;font-size:12px;padding:0 4px;"><span class="dash"></span></div>
<div class="c" style="left:1202px;top:833px;width:104px;height:27px;background:#f2f2f2;border-color:#d9d9d9;justify-content:flex-end;text-align:right;color:#111111;font-size:12px;padding:0 5px;padding-top:2px;">0</div>
<div class="c" style="left:1305px;top:833px;width:104px;height:27px;background:#f2f2f2;border-color:#d9d9d9;justify-content:flex-end;text-align:right;color:#111111;font-size:12px;padding:0 5px;padding-top:2px;">0</div>
<div class="c" style="left:1408px;top:833px;width:104px;height:27px;background:#f2f2f2;border-color:#d9d9d9;justify-content:flex-end;text-align:right;color:#111111;font-size:12px;padding:0 5px;padding-top:2px;">0</div>
<div class="c" style="left:1511px;top:833px;width:146px;height:27px;background:#ffffff;border-color:#d9d9d9;justify-content:flex-end;text-align:right;color:#111111;font-size:12px;padding:0 5px;padding-top:2px;"></div>
<div class="c" style="left:1656px;top:833px;width:104px;height:27px;background:#f2f2f2;border-color:#d9d9d9;justify-content:flex-end;text-align:right;color:#111111;font-size:12px;padding:0 5px;padding-top:2px;">0</div>
<div class="c" style="left:1759px;top:833px;width:146px;height:27px;background:#ffffff;border-color:#d9d9d9;justify-content:flex-end;text-align:right;color:#111111;font-size:12px;padding:0 5px;padding-top:2px;"></div>
<div class="t" style="left:786px;top:124px;font-size:16px;">增值税及附加税费申报表附列资料（一）<span style="margin-left:4px">（本期销售情况明细）</span></div>
<div class="t" style="left:120px;top:159px;width:252px;text-align:right;">税款所屋时间：</div>
<div class="t" style="left:383px;top:159px;letter-spacing:0.5px;">2021-08-31</div>
<div class="t" style="left:120px;top:185px;width:252px;text-align:right;">纳税人名称：(公章)</div>
<div class="t" style="left:383px;top:185px;">123</div>
<div class="t" style="left:1791px;top:185px;">金额单位：元</div>
</div>
<div class="abs" style="left:70px;top:848px;width:1734px;height:10px;background:#fff"></div><div class="abs" style="left:70px;top:848px;width:1668px;height:10px;background:#b0afad;border-radius:5px"></div><div class="abs" style="left:70px;top:858px;width:1734px;height:15px;background:#f7fbfd"></div><div class="abs" style="left:1760px;top:869px;width:44px;height:4px;background:#fdf1e1;border-top:1px solid #f5d9b5;border-left:1px solid #f5d9b5"></div><div class="abs" style="left:50px;top:0;width:1px;height:873px;background:#fafafa"></div><div class="abs" style="left:807px;top:395px;width:196px;height:51px;border:3px solid #fc2b2b"></div>
</body></html>
